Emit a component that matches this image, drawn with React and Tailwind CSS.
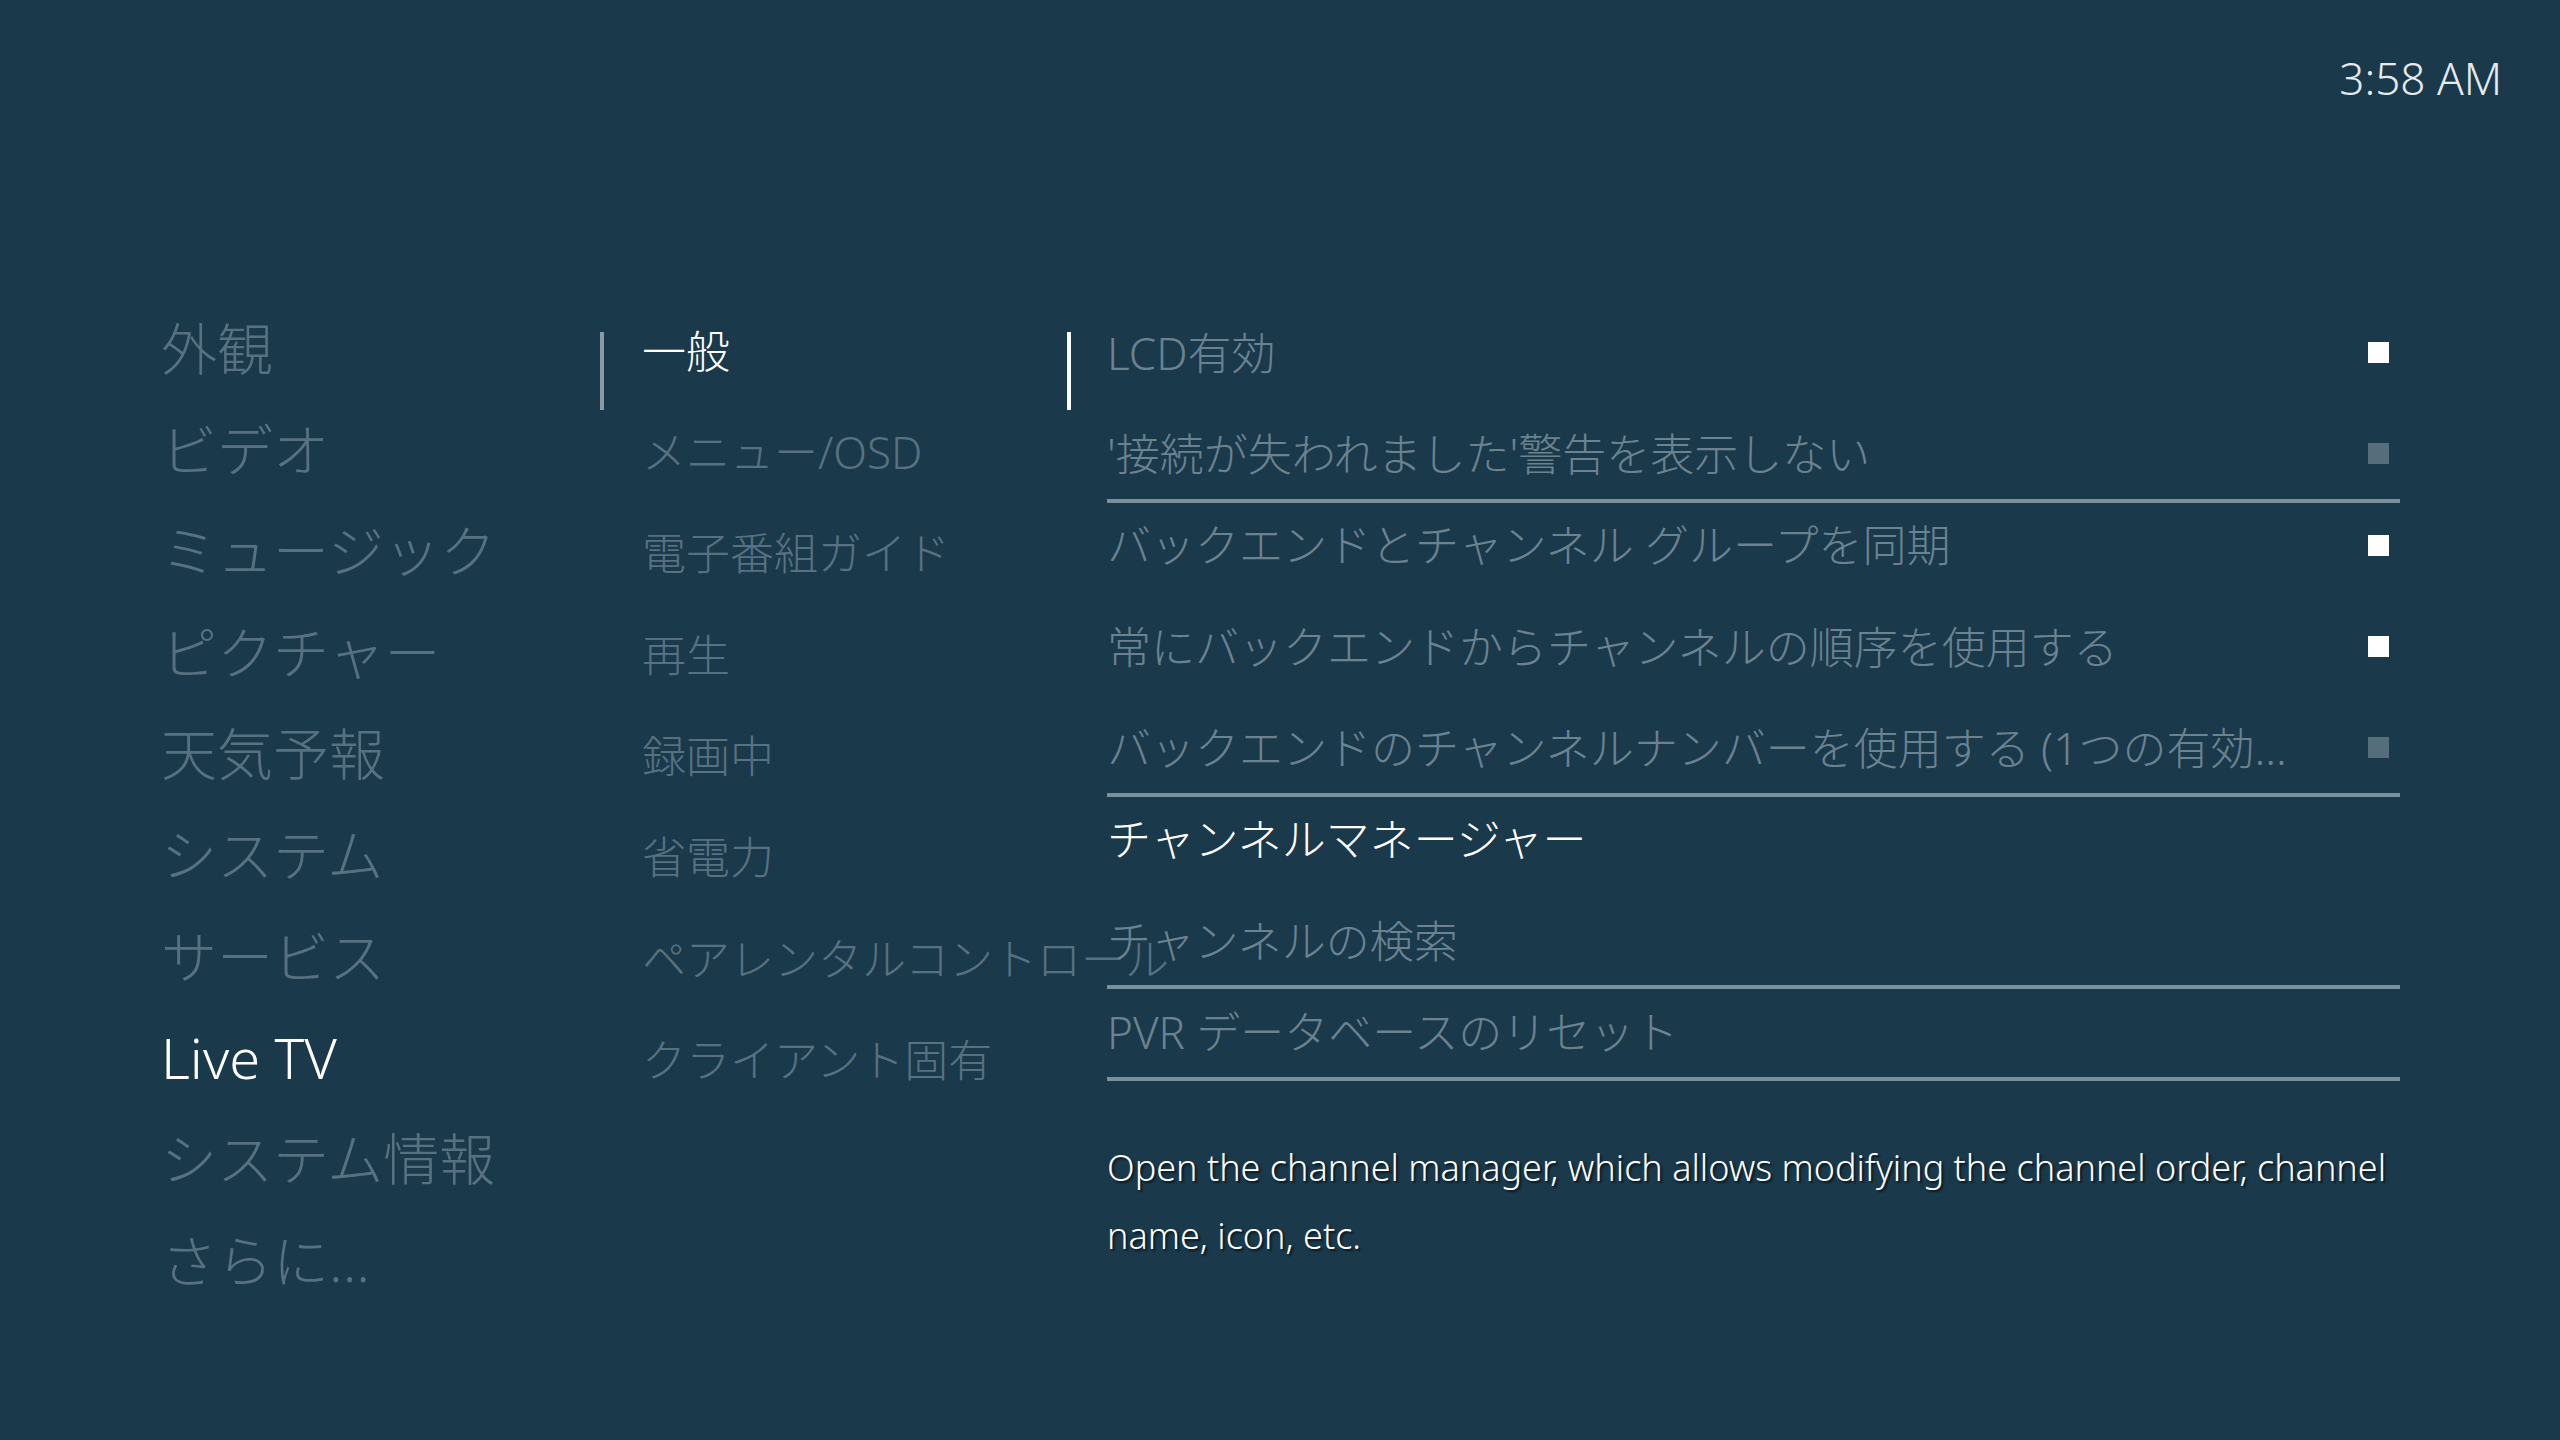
import React from "react";

const sections = ["外観", "ビデオ", "ミュージック", "ピクチャー", "天気予報", "システム", "サービス", "Live TV", "システム情報", "さらに..."];
const categories = ["一般", "メニュー/OSD", "電子番組ガイド", "再生", "録画中", "省電力", "ペアレンタルコントロール", "クライアント固有"];

// groups of settings, a separator line is drawn after each group
const groups = [
  [
    { label: "LCD有効", mark: "on" },
    { label: "'接続が失われました'警告を表示しない", mark: "off" },
  ],
  [
    { label: "バックエンドとチャンネル グループを同期", mark: "on" },
    { label: "常にバックエンドからチャンネルの順序を使用する", mark: "on" },
    { label: "バックエンドのチャンネルナンバーを使用する (1つの有効...", mark: "off" },
  ],
  [
    { label: "チャンネルマネージャー", focused: true },
    { label: "チャンネルの検索" },
  ],
  [{ label: "PVR データベースのリセット" }],
];

function SettingRow({ item }) {
  return (
    <div className="h-[101.33px] flex items-center justify-between pr-[11px]">
      <div
        className={
          "min-w-0 truncate text-[44px] leading-[1.5] " +
          (item.focused ? "text-white" : "text-[#6b8290]")
        }
      >
        {item.label}
      </div>
      {item.mark === "on" && <div className="w-[21px] h-[21px] bg-white shrink-0 ml-6"></div>}
      {item.mark === "off" && <div className="w-[21px] h-[21px] bg-[#566e7b] shrink-0 ml-6"></div>}
    </div>
  );
}

export default function App() {
  return (
    <div className="w-[2560px] h-[1440px] bg-[#1a394b] overflow-hidden font-['Noto_Sans','Noto_Sans_CJK_JP',sans-serif] font-light">
      {/* clock */}
      <div className="flex justify-end pr-[58px] pt-[56px] h-[300px]">
        <span className="text-[44px] leading-none text-[#e4eaee]">3:58 AM</span>
      </div>

      <div className="flex">
        {/* sections */}
        <div className="w-[600px] pl-[161px] -mt-[3px] flex flex-col">
          {sections.map((s) => (
            <div
              key={s}
              className={
                "h-[101.33px] flex items-center text-[56px] leading-none whitespace-nowrap " +
                (s === "Live TV" ? "text-white" : "text-[#587180]")
              }
            >
              {s}
            </div>
          ))}
        </div>

        {/* categories */}
        <div className="w-[467px] flex items-start">
          <div className="w-[4px] h-[78px] mt-[32px] bg-[#8a9ba5] shrink-0"></div>
          <div className="ml-[38px] flex flex-col">
            {categories.map((c, i) => (
              <div
                key={c}
                className={
                  "h-[101.33px] flex items-center text-[44px] leading-none whitespace-nowrap " +
                  (i === 0 ? "text-white" : "text-[#587180]")
                }
              >
                {c}
              </div>
            ))}
          </div>
        </div>

        {/* settings */}
        <div className="flex items-start">
          <div className="w-[4px] h-[78px] mt-[32px] bg-white shrink-0"></div>
          <div className="ml-[36px] w-[1293px] pt-[2px] flex flex-col">
            {groups.map((g, gi) => (
              <React.Fragment key={gi}>
                {g.map((item) => (
                  <SettingRow key={item.label} item={item} />
                ))}
                <div className="h-[4px] -mt-[6px] -mb-[8px] bg-[#7b8f9b]"></div>
              </React.Fragment>
            ))}
            <p className="mt-[61px] text-[36px] leading-[68px] text-white whitespace-nowrap [text-shadow:2px_2px_2px_#0b1a22]">
              Open the channel manager, which allows modifying the channel order, channel
              <br />
              name, icon, etc.
            </p>
          </div>
        </div>
      </div>
    </div>
  );
}
